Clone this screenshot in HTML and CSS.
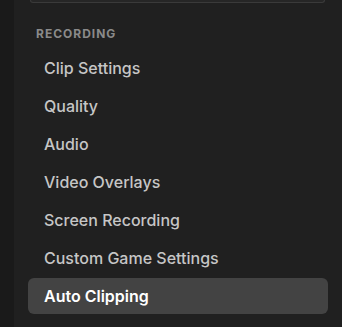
FILE: index.html
```html
<!DOCTYPE html>
<html lang="en">
<head>
  <meta charset="UTF-8">
  <title>Settings</title>
  <link rel="stylesheet" href="styles.css">
</head>
<body>
  <div class="rail"></div>
  <nav class="panel">
    <div class="top-box"></div>
    <div class="section-title">RECORDING</div>
    <ul class="menu">
      <li class="item">Clip Settings</li>
      <li class="item">Quality</li>
      <li class="item">Audio</li>
      <li class="item">Video Overlays</li>
      <li class="item">Screen Recording</li>
      <li class="item">Custom Game Settings</li>
      <li class="item active">Auto Clipping</li>
    </ul>
  </nav>
</body>
</html>
```

FILE: styles.css
```css
html, body {
  margin: 0;
  height: 100%;
}
body {
  display: flex;
  background: #202020;
  font-family: Inter, 'Noto Sans', sans-serif;
  overflow: hidden;
}
.rail {
  width: 14px;
  flex-shrink: 0;
  background: #1a1a1a;
}
.panel {
  flex: 1;
  padding: 0 14px;
}
.top-box {
  height: 2px;
  margin: 0 3px 0 2px;
  background: #262626;
  border: 1px solid #3a3a3a;
  border-top: none;
  border-radius: 0 0 6px 6px;
}
.section-title {
  margin: 22px 0 0 8px;
  height: 25px;
  line-height: 18px;
  font-size: 12px;
  font-weight: 700;
  letter-spacing: 1px;
  color: #8a8a8a;
}
.menu {
  list-style: none;
  margin: 0;
  padding: 0;
  display: flex;
  flex-direction: column;
  gap: 2px;
}
.item {
  height: 36px;
  line-height: 36px;
  padding-left: 16px;
  border-radius: 6px;
  font-size: 16px;
  font-weight: 500;
  color: #c6c6c6;
}
.item.active {
  background: #434343;
  color: #fff;
  font-weight: 600;
}
```
